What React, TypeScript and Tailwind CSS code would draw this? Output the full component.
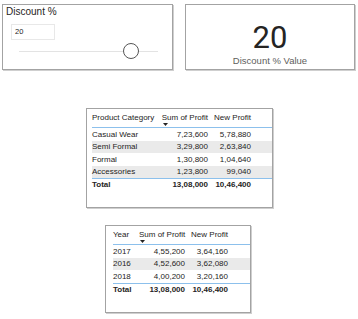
import React from "react";

const font = "font-['Liberation_Sans',Arial,sans-serif]";

function Arrow() {
  return (
    <svg className="absolute left-[1px] top-[11px]" width="5" height="3" viewBox="0 0 5 3">
      <path d="M0 0 L5 0 L2.5 3 Z" fill="#252423" />
    </svg>
  );
}

type Row = { a: string; b: string; c: string };

function Table({
  head,
  rows,
  total,
  widths,
}: {
  head: string;
  rows: Row[];
  total: Row;
  widths: [string, string, string];
}) {
  const hs = [13, 12, 13, 12];
  return (
    <div className="flex flex-col text-[8px] text-[#252423] whitespace-nowrap">
      <div className="flex h-[16px] border-b border-[#8cc0ec] leading-[12px]">
        <div className={widths[0]}>{head}</div>
        <div className={`${widths[1]} text-right`}>
          <span className="relative inline-block">
            Sum of Profit
            <Arrow />
          </span>
        </div>
        <div className={`${widths[2]} text-right pr-[4px]`}>New Profit</div>
      </div>
      {rows.map((r, i) => (
        <div
          key={r.a}
          className={`flex items-center ${i % 2 === 1 ? "bg-[#eaeaea]" : "bg-white"}`}
          style={{ height: hs[i] }}
        >
          <div className={widths[0]}>{r.a}</div>
          <div className={`${widths[1]} text-right`}>{r.b}</div>
          <div className={`${widths[2]} text-right pr-[4px]`}>{r.c}</div>
        </div>
      ))}
      <div className="flex items-center h-[13px] border-t border-[#8cc0ec] font-bold">
        <div className={widths[0]}>{total.a}</div>
        <div className={`${widths[1]} text-right`}>{total.b}</div>
        <div className={`${widths[2]} text-right pr-[4px]`}>{total.c}</div>
      </div>
    </div>
  );
}

export default function App() {
  return (
    <div className={`w-[358px] h-[319px] bg-white overflow-hidden ${font}`}>
      <div className="flex pt-[4px] pl-[2px] gap-[12px]">
        <div className="w-[171px] h-[66px] border border-[#a3a3a3] shadow-[1px_1px_0_#cfcfcf] pl-[3px] pt-[1px] flex flex-col">
          <div className="text-[10px] leading-[12px] text-[#252423]">Discount %</div>
          <div className="ml-[5px] mt-[6px] w-[44px] h-[16px] border border-[#e8e8e8] pl-[3px] text-[7.5px] leading-[14px] text-[#252423]">
            20
          </div>
          <div className="relative ml-[13px] mt-[3px] w-[139px] h-[16px]">
            <div className="absolute left-0 right-0 top-[7.5px] h-[1px] bg-[#e3e3e3]" />
            <div className="absolute left-[104px] top-0 w-[16px] h-[16px] rounded-full border-[1.5px] border-[#555555] bg-white" />
          </div>
        </div>
        <div className="w-[170px] h-[66px] border border-[#a3a3a3] shadow-[1px_1px_0_#cfcfcf] flex flex-col items-center pt-[17px]">
          <div className="font-['Roboto',sans-serif] text-[31px] leading-[31px] text-[#252423]">20</div>
          <div className="mt-[2px] text-[9.5px] leading-[12px] text-[#605e5c]">Discount % Value</div>
        </div>
      </div>

      <div className="ml-[86px] mt-[38px] w-[187px] h-[100px] border border-[#a3a3a3] shadow-[1px_1px_0_#cfcfcf] pl-[5px] pt-[3px]">
        <Table
          head="Product Category"
          widths={["w-[68px]", "w-[48px]", "w-[47px]"]}
          rows={[
            { a: "Casual Wear", b: "7,23,600", c: "5,78,880" },
            { a: "Semi Formal", b: "3,29,800", c: "2,63,840" },
            { a: "Formal", b: "1,30,800", c: "1,04,640" },
            { a: "Accessories", b: "1,23,800", c: "99,040" },
          ]}
          total={{ a: "Total", b: "13,08,000", c: "10,46,400" }}
        />
      </div>

      <div className="ml-[105px] mt-[17px] w-[146px] h-[88px] border border-[#a3a3a3] shadow-[1px_1px_0_#cfcfcf] pl-[7px] pt-[3px]">
        <Table
          head="Year"
          widths={["w-[26px]", "w-[46px]", "w-[47px]"]}
          rows={[
            { a: "2017", b: "4,55,200", c: "3,64,160" },
            { a: "2016", b: "4,52,600", c: "3,62,080" },
            { a: "2018", b: "4,00,200", c: "3,20,160" },
          ]}
          total={{ a: "Total", b: "13,08,000", c: "10,46,400" }}
        />
      </div>
    </div>
  );
}
